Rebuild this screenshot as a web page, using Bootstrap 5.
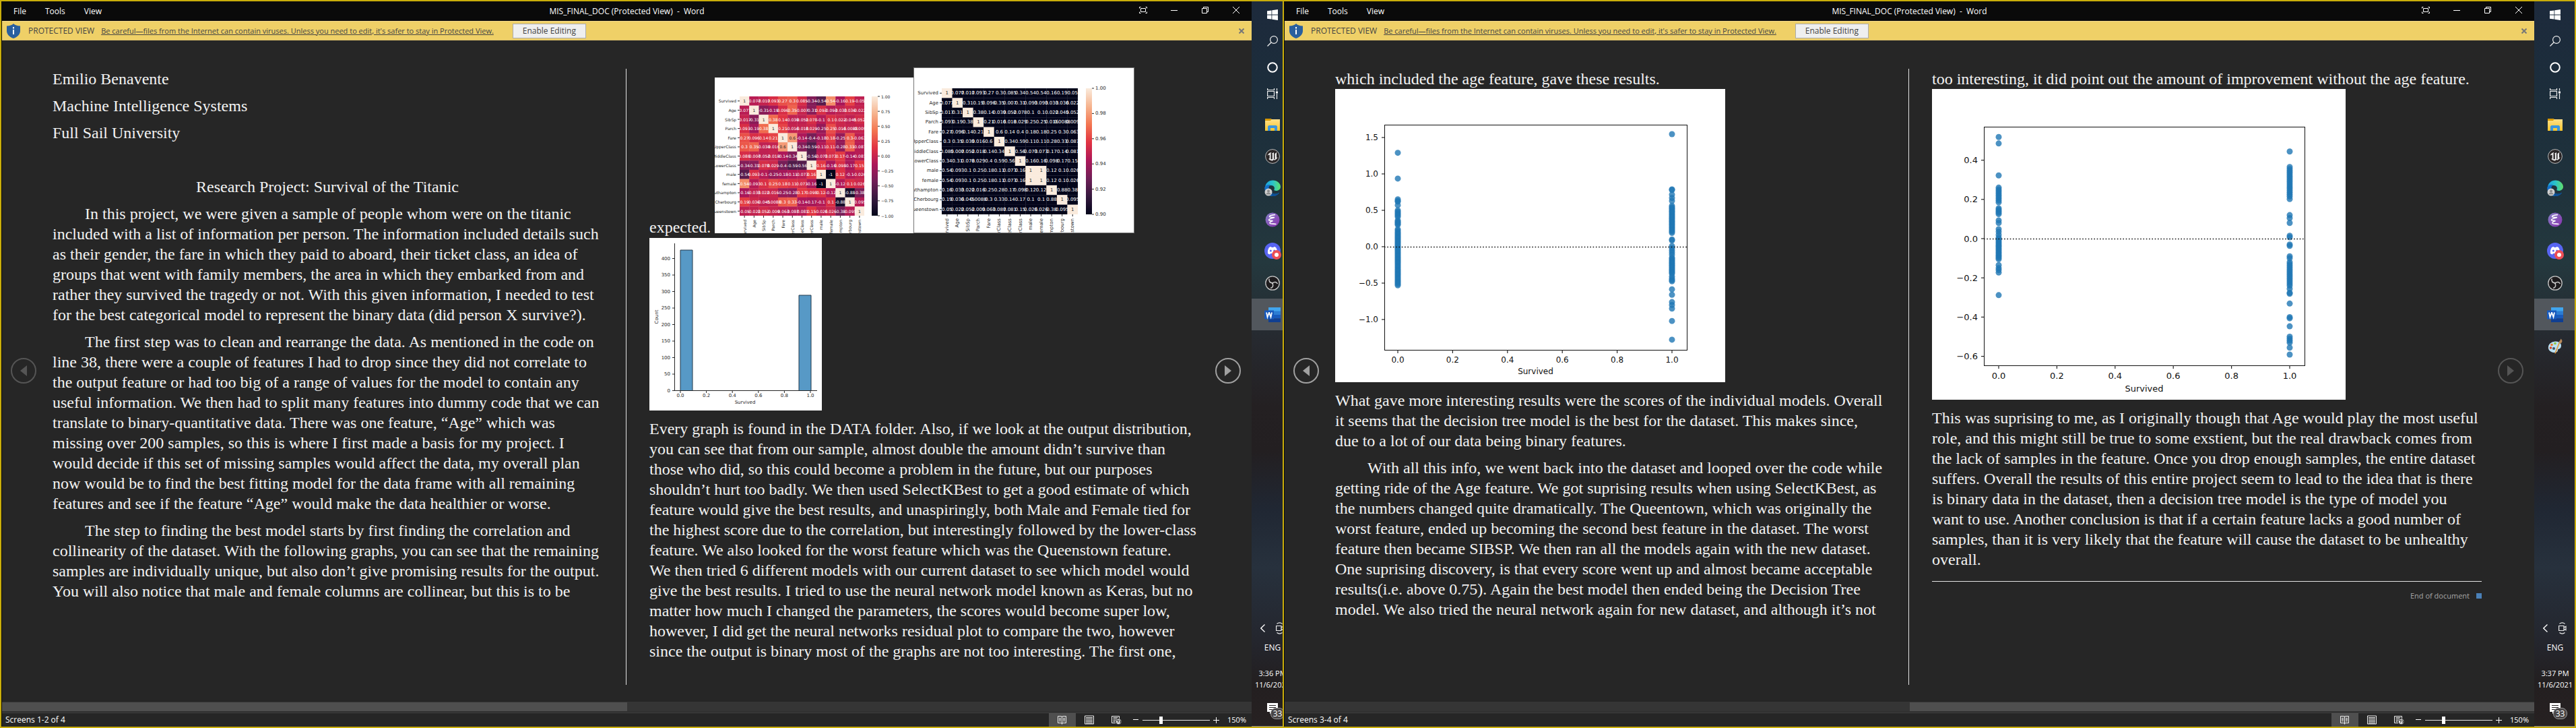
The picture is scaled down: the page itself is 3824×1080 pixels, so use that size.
<!DOCTYPE html>
<html lang="en" data-bs-theme="dark">
<head>
<meta charset="utf-8">
<meta name="viewport" content="width=device-width, initial-scale=1">
<title>MIS_FINAL_DOC (Protected View) - Word</title>
<link href="https://cdn.jsdelivr.net/npm/bootstrap@5.3.0/dist/css/bootstrap.min.css" rel="stylesheet">
<style>
:root{--edge:#c9ad0a;--page:#262626;--ui:"Open Sans","Noto Sans",sans-serif}
body{font-family:var(--ui);font-size:12px;line-height:16px;background:var(--page);color:#fff;overflow-x:hidden}
button{font:inherit;color:inherit;background:none;border:0;padding:0}
svg{display:block;flex:none}
.desktop{min-height:100vh}
.monitor{flex:1 1 0;min-width:0;border:2px solid var(--edge);background:var(--page)}
.monitor + .monitor{margin-left:-16px;z-index:1}
.app{flex:1 1 0;min-width:0;border-left:1px solid #0a0a0a}
.titlebar{height:29px;background:#0a0a0a}
.titlebar nav{gap:28px}
.titlebar nav button:first-child{margin-left:17px}
.side{flex:1 1 0}
.winbtn{width:46px;height:26px;display:flex;align-items:center;justify-content:center}
.warnbar{height:29px;background:#efd067;border-top:1px solid #f3d98a;border-bottom:1px solid #d9bf6c;color:#444;padding:0 7px}
.warnbar a{font-size:11px;color:#444;text-decoration:underline;margin-left:10px}
.enable{width:109px;height:22px;background:#efefef;border:1px solid #ababab;color:#444;margin-left:28px}
.reader{flex:1 1 auto;padding:42px 78px 25px 75px}
.sheet{flex:1 1 0;min-width:0;font-family:"Liberation Serif",serif;font-size:24px;line-height:30px;color:#f2f2f2}
.sheet p{margin:0 0 10px}
.sheet .ind{text-indent:48px}
.rule{width:70px;display:flex;justify-content:center}
.rule::before{content:"";width:1px;background:#e4e4e4}
.plot{background:#fff;margin:0 0 12px;max-width:100%}
.plot text,.heat text{font-family:"DejaVu Sans",sans-serif}
.heatrow{height:246px;gap:6px;margin:-2px 0 7px}
.heatrow > span{margin-bottom:-6px}
.heat{background:#fff}
.heat svg{overflow:hidden}
.framed{outline:1px solid #767676;outline-offset:-1px}
.turn{top:529px;width:38px;height:38px;border:2px solid #555;border-radius:50%;color:#555;display:flex;align-items:center;justify-content:center}
.turn.live{border-color:#a0a0a0;color:#a0a0a0}
.turn.prev{left:13px}.turn.next{right:16px}
.endmark{font-family:var(--ui);font-size:11px;line-height:16px;color:#a6a6a6;border-top:1px solid #e4e4e4;margin-top:17px;padding-top:13px}
.endmark i{width:8px;height:8px;background:#4a80b8;margin-left:10px}
.track{height:15px;background:#353535;padding:1px 0}
.track div{width:50%;background:#4f4f4f}
.statusbar{height:21px;border-top:1px solid #474747;margin-top:1px;padding:0 8px 0 5px}
.view{width:40px;height:20px;display:flex;align-items:center;justify-content:center}
.view.on{background:#4f4f4f}
.percent{font-size:11px;margin-left:12px}
.zoomer{-webkit-appearance:none;appearance:none;width:100px;height:11px;margin:0 4px 0 5px;background:linear-gradient(#e6e6e6,#e6e6e6) center/100% 1px no-repeat}
.zoomer::-webkit-slider-thumb{-webkit-appearance:none;width:5px;height:11px;background:#fff;border:0}
.taskbar{width:60px;background:linear-gradient(#1d2a3c 0,#1c2d3b 12%,#1f323c 25%,#24383e 36%,#26292f 47%,#242022 56%,#231f21 62%,#202733 70%,#27313d 78%,#24262e 88%,#231f20 94%,#272122 100%)}
.tb{width:62px;height:47px;display:flex;align-items:center;justify-content:center}
.tb.sys{height:39px}
.tb.sys + .tb:not(.sys){margin-top:3px}
.tb.on{background:#52575d}
.tray{width:62px}
.trayicons{gap:16px;padding:0 0 0 13px}
.lang{margin-top:12px}
.clock{font-size:11px;line-height:17px;white-space:nowrap;margin-top:21px}
.notif{width:62px;height:35px;margin-top:19px;padding-left:23px;border-bottom:1px solid #8b8787}
.badge-n{left:28px;top:7px;width:21px;height:17px;border:1px solid #999;border-radius:8px;background:#4a4647;line-height:15px}
</style>
<script src="https://cdn.jsdelivr.net/npm/bootstrap@5.3.0/dist/js/bootstrap.bundle.min.js"></script>
</head>
<body>
<svg width="0" height="0" class="position-absolute" aria-hidden="true">
<defs>
<linearGradient id="gEdge" x1="0" y1="0" x2="1" y2="0"><stop offset="0" stop-color="#1a9fe0"/><stop offset=".5" stop-color="#2cc3c8"/><stop offset="1" stop-color="#5fe06a"/></linearGradient>
<linearGradient id="gEm" x1="0" y1="0" x2="1" y2="1"><stop offset="0" stop-color="#8381c5"/><stop offset="1" stop-color="#8a2fae"/></linearGradient>
<linearGradient id="gFo" x1="0" y1="0" x2="0" y2="1"><stop offset="0" stop-color="#ffe08a"/><stop offset="1" stop-color="#f8c52c"/></linearGradient>
<linearGradient id="rocket" x1="0" y1="1" x2="0" y2="0"><stop offset="0" stop-color="#03051a"/><stop offset=".143" stop-color="#35193e"/><stop offset=".286" stop-color="#701f57"/><stop offset=".429" stop-color="#ad1759"/><stop offset=".571" stop-color="#e13342"/><stop offset=".714" stop-color="#f37651"/><stop offset=".857" stop-color="#f6b48f"/><stop offset="1" stop-color="#faebdd"/></linearGradient>
<symbol id="i-shield" viewBox="0 0 20 22"><path d="M10 0c2 2.200 5.500 3.500 10 3.500V11c0 5-4.500 9-10 11C4.500 20 0 16 0 11V3.500C4.500 3.500 8 2.200 10 0z" fill="#2a5f9e"/><path d="M9 5h2v2.500H9zM9 9h2v7H9z" fill="#fff"/></symbol>
<symbol id="i-fs" viewBox="0 0 12 12"><path d="M.5 3.500V1.500h2M9.500 1.500h2v2M11.500 8.500v2h-2M2.500 10.500h-2v-2M2.500 3.500h7v5h-7z" fill="none" stroke="#fff"/></symbol>
<symbol id="i-min" viewBox="0 0 10 10"><path d="M0 5.500h10" stroke="#fff"/></symbol>
<symbol id="i-max" viewBox="0 0 10 10"><path d="M.5 2.500h7v7h-7zM2.500 2V.5h7v7H8" fill="none" stroke="#fff"/></symbol>
<symbol id="i-x" viewBox="0 0 10 10"><path d="M0 0l10 10M10 0L0 10" stroke="#fff" fill="none"/></symbol>
<symbol id="i-xb" viewBox="0 0 8 8"><path d="M.5.5l7 7M7.500.5l-7 7" stroke="#777" stroke-width="2" fill="none"/></symbol>
<symbol id="i-read" viewBox="0 0 14 14"><path d="M6.500 1.500V13.500M.5 1.500h4.500L6.500 2.500l1.500-1H12.500v10H8L6.500 12.500l-1.500-1H.5zM2 4.500h3M2 6.500h3M2 8.500h3M8 4.500h3M8 6.500h3M8 8.500h3" fill="none" stroke="#eee"/></symbol>
<symbol id="i-print" viewBox="0 0 14 14"><path d="M.5 1h13v12H.5zM2 3.500h10M2 5.500h10M2 7.500h10M2 9.500h10M2 11.500h10" fill="none" stroke="#eee"/></symbol>
<symbol id="i-web" viewBox="0 0 15 14"><path d="M6 11.500H.5V1.500h11v4M2.500 3.500h7M2.500 5.500h6M2.500 7.500h4M2.500 9.500h3" fill="none" stroke="#eee"/><circle cx="10.500" cy="9.500" r="4" fill="#e6e6e6" stroke="#262626" stroke-width=".6"/><path d="M8 7.500l2.500.5-1 3M12 7.500l1.500 2-1 2" stroke="#333" stroke-width="1.200" fill="none"/></symbol>
<symbol id="i-start" viewBox="0 0 16 16"><path d="M0 2.300L6.500 1.400v6.200H0zM7.300 1.300L16 0v7.600H7.300zM0 8.400h6.500v6.200L0 13.700zM7.300 8.400H16V16l-8.700-1.300z" fill="#fff"/></symbol>
<symbol id="i-find" viewBox="0 0 16 16"><circle cx="10" cy="6" r="5.400" fill="none" stroke="#eee" stroke-width="1.200"/><path d="M6.200 9.800L.5 15.500" stroke="#eee" stroke-width="1.300"/></symbol>
<symbol id="i-cort" viewBox="0 0 16 16"><circle cx="8" cy="8" r="6.800" fill="none" stroke="#fff" stroke-width="2"/></symbol>
<symbol id="i-task" viewBox="0 0 16 16"><path d="M.6 0v2.500h9.900V0M.6 16v-2.500h9.900V16M.6 4.500h9.900v7H.6zM14.500 0v3.500M14.500 8v8" fill="none" stroke="#eee" stroke-width="1.200"/><path d="M13 4.500h3v3h-3z" fill="#fff"/></symbol>
<symbol id="i-folder" viewBox="0 0 22 18"><path d="M0 0h9l1 1.500V4H0z" fill="#d99a00"/><path d="M0 3h8l1.500-2H22v17H0z" fill="url(#gFo)"/><path d="M4 18v-6.500L5.500 10h11l1.500 1.500V18h-4v-4H8v4z" fill="#3a96dd"/></symbol>
<symbol id="i-ue" viewBox="0 0 22 22"><circle cx="11" cy="11" r="10.400" fill="#2a2627" stroke="#bbb"/><path d="M3.500 10C4.500 7 7 5.500 9.500 4.800 8.500 5.800 8.500 6.500 8.500 8v6.500c0 1 1.200 1.200 2.300.2V7.500L10 6.700 13 5v9.500c0 .8.6 1.100 1.500.6V7L18 4.500c-1 1.500-1 2-1 4v4.500c.6 0 1.200-.4 1.600-.9-.9 2.400-2.600 3.900-4.600 4.600l-1-1-2 1.800c-2.500-.1-4.800-1.300-5.800-3 1 .2 1.500-.2 1.500-1V8.700C5 8.500 4.200 9.200 3.500 10z" fill="#eee"/></symbol>
<symbol id="i-edge" viewBox="0 0 24 24"><path d="M1 12C1 5 6 .5 12.500.5S24 5.500 24 10c0 3.500-3 6-6.500 6-2.500 0-3.500-1-3-2 1.500-3-1-6-4.500-6-5 0-8 4-9 4z" fill="url(#gEdge)"/><path d="M.3 11C1.500 8 5.500 6.500 9 7c-4 3-4 11 5 13.500 3.500.8 7-.5 8-2-1.500 3.500-5.500 5.500-10 5.500C5 24-.3 18 .3 11z" fill="#1470c8"/><path d="M8.500 12c-1 5 2.500 8.500 7 8.500 2.500 0 5.500-1 6.500-2-1 3.500-5 5.500-10 5.500-4-2-5-8-3.500-12z" fill="#0d4f94"/><circle cx="6" cy="18" r="5.500" fill="#d0d0d0"/><circle cx="6" cy="16.500" r="2" fill="#8d8d8d"/><path d="M2.500 21.500c0-4 7-4 7 0z" fill="#8d8d8d"/></symbol>
<symbol id="i-emacs" viewBox="0 0 22 22"><circle cx="11" cy="11" r="10.500" fill="url(#gEm)"/><path d="M15 3.500c-5 .5-8.500 1.500-8.500 2.800 0 1.200 4 1.200 7.500 1.200-5 1.200-8.500 2.500-8.500 3.800 0 1.200 3.500 1.500 6 1.200-2.500 1-5 2.300-4.500 3.500.8 1.700 6.500.8 9.500 1.500" fill="none" stroke="#fff" stroke-width="1.600"/></symbol>
<symbol id="i-disc" viewBox="0 0 25 25"><circle cx="12" cy="12" r="12" fill="#5865f2"/><path d="M5 16c-.5-3 .3-6.500 2-9 1-.6 2-.9 3-1l.5 1h3l.5-1c1 .1 2 .4 3 1 1.700 2.500 2.500 6 2 9-1 .8-2 1.200-3.200 1.500l-.8-1.500h-6l-.8 1.500C7 17.200 6 16.800 5 16z" fill="#fff"/><circle cx="9.300" cy="12" r="1.500" fill="#5865f2"/><circle cx="14.700" cy="12" r="1.500" fill="#5865f2"/><circle cx="18" cy="18" r="7" fill="#ed4e56"/><circle cx="18" cy="18" r="3" fill="#fff"/></symbol>
<symbol id="i-obs" viewBox="0 0 22 22"><circle cx="11" cy="11" r="10.200" fill="#1d1b1d" stroke="#c8c8c8" stroke-width="1.300"/><path d="M6 4.500c-.5 3.500 1.500 6 5 6.500M18.500 12c-1.500-3-4.500-3.500-7.500-1M8 18.500c3.500-.5 4.500-3.500 3-7.500" fill="none" stroke="#c8c8c8" stroke-width="1.500"/><circle cx="11" cy="11" r="1.300" fill="#c8c8c8"/></symbol>
<symbol id="i-word" viewBox="0 0 24 22"><path d="M6 0h18v6H6z" fill="#41a5ee"/><path d="M6 5.500h18V11H6z" fill="#2b7cd3"/><path d="M6 11h18v5.500H6z" fill="#185abd"/><path d="M6 16.500h18V22H6z" fill="#103f91"/><path d="M0 4.500h14v13H0z" fill="#185abd"/><path d="M3 7.500l1.500 7 2.300-6.500h.4l2.300 6.500 1.500-7" fill="none" stroke="#fff" stroke-width="1.800"/></symbol>
<symbol id="i-paint" viewBox="0 0 24 24"><path d="M2 15C1 9 6 5 12 4.500c5-.3 9 2 9 6 0 2.500-1 4.500-2.500 5-1.500.4-2.500.5-2.500 2 0 2-1.500 3.500-5 3.500s-8-2-9-6z" fill="#b9dff2"/><circle cx="5.500" cy="14" r="1.800" fill="#d9442e"/><circle cx="7" cy="9.500" r="1.800" fill="#e9792b"/><circle cx="12" cy="7.500" r="1.800" fill="#8dc63f"/><circle cx="10" cy="15" r="2" fill="#3a5568"/><path d="M19 7l-6 15-1.500 1 .2-2L17.500 6z" fill="#e49b3f"/><path d="M18 6.500c-1-2 1.500-2.500 2.500-6 2 2 3.500 5-1 7.500z" fill="#b98a5c"/></symbol>
<symbol id="i-cam" viewBox="0 0 12 18"><path d="M1.500 2.500c2.500-2 5.500-2 8 0M1.500 15.500c2.500 2 5.500 2 8 0M.6 5.500h7.400v7H.6zM8 8l3-1.800v5.600L8 10" fill="none" stroke="#eee" stroke-width="1.200"/></symbol>
<symbol id="i-chev" viewBox="0 0 7 12"><path d="M6.500.5L.8 6l5.700 5.500" fill="none" stroke="#fff" stroke-width="1.300"/></symbol>
<symbol id="i-note" viewBox="0 0 16 16"><path d="M0 0h16v13H8l-4 3v-3H0z" fill="#fff"/><path d="M3 3.500h10M3 6.500h10M3 9.500h7" stroke="#231f20" stroke-width="1.200"/></symbol>
</defs>
</svg>

<div class="desktop d-flex" id="desktop">
  <section class="monitor d-flex position-relative overflow-hidden">
    <div class="app d-flex flex-column position-relative">
      <header class="titlebar d-flex" data-part="title"></header>
      <div class="warnbar d-flex align-items-center" data-part="warn"></div>
      <main class="reader d-flex">
        <article class="sheet">
          <p>Emilio Benavente</p>
          <p>Machine Intelligence Systems</p>
          <p>Full Sail University</p>
          <p>&nbsp;</p>
          <p class="text-center">Research Project: Survival of the Titanic</p>
          <p class="ind">In this project, we were given a sample of people whom were on the titanic included with a list of information per person. The information included details such as their gender, the fare in which they paid to aboard, their ticket class, an idea of groups that went with family members, the area in which they embarked from and rather they survived the tragedy or not. With this given information, I needed to test for the best categorical model to represent the binary data (did person X survive?).</p>
          <p class="ind">The first step was to clean and rearrange the data. As mentioned in the code on line 38, there were a couple of features I had to drop since they did not correlate to the output feature or had too big of a range of values for the model to contain any useful information. We then had to split many features into dummy code that we can translate to binary-quantitative data. There was one feature, “Age” which was missing over 200 samples, so this is where I first made a basis for my project. I would decide if this set of missing samples would affect the data, my overall plan now would be to find the best fitting model for the data frame with all remaining features and see if the feature “Age” would make the data healthier or worse.</p>
          <p class="ind">The step to finding the best model starts by first finding the correlation and collinearity of the dataset. With the following graphs, you can see that the remaining samples are individually unique, but also don’t give promising results for the output. You will also notice that male and female columns are collinear, but this is to be</p>
        </article>
        <div class="rule"></div>
        <article class="sheet">
          <div class="heatrow d-flex align-items-end"><span>expected.</span>
            <div class="d-flex align-items-end">
              <svg class="heat" id="heatA" width="295" height="231" role="img" aria-label="Correlation heatmap"></svg>
              <svg class="heat framed" id="heatB" width="328" height="246" role="img" aria-label="Absolute correlation heatmap"></svg>
            </div>
          </div>
          <svg class="plot" id="hist" width="256" height="256" role="img" aria-label="Histogram of Survived"></svg>
          <p>Every graph is found in the DATA folder. Also, if we look at the output distribution, you can see that from our sample, almost double the amount didn’t survive than those who did, so this could become a problem in the future, but our purposes shouldn’t hurt too badly. We then used SelectKBest to get a good estimate of which feature would give the best results, and unaspiringly, both Male and Female tied for the highest score due to the correlation, but interestingly followed by the lower-class feature. We also looked for the worst feature which was the Queenstown feature.<br>We then tried 6 different models with our current dataset to see which model would give the best results. I tried to use the neural network model known as Keras, but no matter how much I changed the parameters, the scores would become super low, however, I did get the neural networks residual plot to compare the two, however since the output is binary most of the graphs are not too interesting. The first one,</p>
        </article>
      </main>
      <button class="turn prev position-absolute" aria-label="Previous screen" disabled><svg width="10" height="16" viewBox="0 0 10 16"><path d="M10 0v16L0 8z" fill="currentColor"/></svg></button>
      <button class="turn next live position-absolute" aria-label="Next screen"><svg width="10" height="16" viewBox="0 0 10 16"><path d="M0 0v16l10-8z" fill="currentColor"/></svg></button>
      <div class="track d-flex"><div></div></div>
      <footer class="statusbar d-flex align-items-center" data-part="status" data-label="Screens 1-2 of 4"></footer>
    </div>
    <aside class="taskbar d-flex flex-column flex-shrink-0" data-part="tasks" data-time="3:36 PM"></aside>
  </section>

  <section class="monitor d-flex position-relative overflow-hidden">
    <div class="app d-flex flex-column position-relative">
      <header class="titlebar d-flex" data-part="title"></header>
      <div class="warnbar d-flex align-items-center" data-part="warn"></div>
      <main class="reader d-flex">
        <article class="sheet">
          <div>which included the age feature, gave these results.</div>
          <svg class="plot" id="resA" width="579" height="435" role="img" aria-label="Residual plot with Age"></svg>
          <p>What gave more interesting results were the scores of the individual models. Overall it seems that the decision tree model is the best for the dataset. This makes since, due to a lot of our data being binary features.</p>
          <p class="ind">With all this info, we went back into the dataset and looped over the code while getting ride of the Age feature. We got suprising results when using SelectKBest, as the numbers changed quite dramatically. The Queentown, which was originally the worst feature, ended up becoming the second best feature in the dataset. The worst feature then became SIBSP. We then ran all the models again with the new dataset. One suprising discovery, is that every score went up and almost became acceptable results(i.e. above 0.75). Again the best model then ended being the Decision Tree model. We also tried the neural network again for new dataset, and although it’s not</p>
        </article>
        <div class="rule"></div>
        <article class="sheet">
          <div>too interesting, it did point out the amount of improvement without the age feature.</div>
          <svg class="plot" id="resB" width="614" height="461" role="img" aria-label="Residual plot without Age"></svg>
          <p>This was suprising to me, as I originally though that Age would play the most useful role, and this might still be true to some exstient, but the real drawback comes from the lack of samples in the feature. Once you drop enough samples, the entire dataset suffers. Overall the results of this entire project seem to lead to the idea that is there is binary data in the dataset, then a decision tree model is the type of model you want to use. Another conclusion is that if a certain feature lacks a good number of samples, than it is very likely that the feature will cause the dataset to be unhealthy overall.</p>
          <div class="endmark d-flex justify-content-end align-items-center">End of document<i></i></div>
        </article>
      </main>
      <button class="turn prev live position-absolute" aria-label="Previous screen"><svg width="10" height="16" viewBox="0 0 10 16"><path d="M10 0v16L0 8z" fill="currentColor"/></svg></button>
      <button class="turn next position-absolute" aria-label="Next screen" disabled><svg width="10" height="16" viewBox="0 0 10 16"><path d="M0 0v16l10-8z" fill="currentColor"/></svg></button>
      <div class="track d-flex justify-content-end"><div></div></div>
      <footer class="statusbar d-flex align-items-center" data-part="status" data-label="Screens 3-4 of 4"></footer>
    </div>
    <aside class="taskbar d-flex flex-column flex-shrink-0" data-part="tasks" data-time="3:37 PM" data-paint="1"></aside>
  </section>
</div>

<script>
const icon = (id, w, h) => `<svg width="${w}" height="${h}" aria-hidden="true"><use href="#i-${id}"/></svg>`;
const parts = {
  title: () => `<nav class="side d-flex align-items-center"><button>File</button><button>Tools</button><button>View</button></nav>
    <div class="d-flex align-items-center text-nowrap">MIS_FINAL_DOC (Protected View)&nbsp; -&nbsp; Word</div>
    <div class="side d-flex justify-content-end">
      <button class="winbtn" aria-label="Full screen">${icon('fs',12,12)}</button><button class="winbtn" aria-label="Minimize">${icon('min',10,10)}</button>
      <button class="winbtn" aria-label="Restore">${icon('max',10,10)}</button><button class="winbtn" aria-label="Close">${icon('x',10,10)}</button></div>`,
  warn: () => `${icon('shield',20,22)}<span class="ms-2 ps-1">PROTECTED VIEW</span><a href="#">Be careful—files from the Internet can contain viruses. Unless you need to edit, it's safer to stay in Protected View.</a>
    <button class="enable">Enable Editing</button><button class="ms-auto p-1" aria-label="Dismiss">${icon('xb',8,8)}</button>`,
  status: el => `<span>${el.dataset.label}</span><button class="view on ms-auto" aria-label="Read mode">${icon('read',14,14)}</button>
    <button class="view" aria-label="Print layout">${icon('print',14,14)}</button><button class="view" aria-label="Web layout">${icon('web',15,14)}</button>
    <button class="ms-1" aria-label="Zoom out"><svg width="10" height="10"><path d="M1 4.500h8" stroke="#fff"/></svg></button>
    <input class="zoomer" type="range" min="0" max="100" value="26" aria-label="Zoom">
    <button aria-label="Zoom in"><svg width="10" height="10"><path d="M1 5.500h9M5.500 1v9" stroke="#fff"/></svg></button>
    <span class="percent">150%</span>`,
  tasks: el => {
    const sys = [['start',16,16,'Start'],['find',16,16,'Search'],['cort',16,16,'Cortana'],['task',16,16,'Task view']];
    const apps = [['folder',22,18,'Explorer'],['ue',22,22,'Unreal'],['edge',24,24,'Edge'],['emacs',22,22,'Emacs'],['disc',25,25,'Discord'],['obs',22,22,'OBS'],['word',24,22,'Word']];
    if (el.dataset.paint) apps.push(['paint',24,24,'Paint']);
    const b = (a, c) => `<button class="tb ${c}" aria-label="${a[3]}">${icon(a[0],a[1],a[2])}</button>`;
    return sys.map(a => b(a,'sys')).join('') + apps.map(a => b(a, a[0] === 'word' ? 'on' : '')).join('') +
      `<div class="tray mt-auto text-center">
        <div class="trayicons d-flex align-items-center">${icon('chev',7,12)}${icon('cam',12,18)}</div>
        <div class="lang">ENG</div><div class="clock">${el.dataset.time}<br>11/6/2021</div>
        <div class="notif position-relative">${icon('note',16,16)}<span class="badge-n position-absolute">33</span></div></div>`;
  }
};
document.querySelectorAll('[data-part]').forEach(el => el.innerHTML = parts[el.dataset.part](el));

const T = (x, y, s, size, anchor, fill, extra) => `<text x="${x}" y="${y}" font-size="${size}" text-anchor="${anchor}" dominant-baseline="central" fill="${fill || '#262626'}" ${extra || ''}>${s}</text>`;
const L = (x1, y1, x2, y2, extra) => `<path d="M${x1} ${y1}L${x2} ${y2}" stroke="#262626" ${extra || ''}/>`;

/* correlation matrix, upper triangle */
const names = ['Survived','Age','SibSp','Parch','Fare','UpperClass','MiddleClass','LowerClass','male','female','Southampton','Cherbourg','Queenstown'];
const upper = [
 [1,-.077,-.017,.093,.27,.3,.085,-.34,-.54,.54,-.16,.19,-.05],
 [1,-.31,-.19,.096,.35,-.007,-.31,.093,-.093,-.033,.036,-.022],
 [1,.38,.14,-.039,-.052,.078,-.1,.1,.022,-.045,.052],
 [1,.21,-.016,-.018,.029,-.25,.25,.016,-.0088,-.009],
 [1,.6,-.14,-.4,-.18,.18,-.25,.3,-.063],
 [1,-.34,-.59,-.11,.11,-.28,.33,-.087],
 [1,-.56,-.073,.073,.17,-.14,-.081],
 [1,.16,-.16,.098,-.17,.15],
 [1,-1,.12,-.1,-.026],[1,-.12,.1,.026],[1,-.88,-.38],[1,-.095],[1]];
const corr = (r, c) => r <= c ? upper[r][c - r] : upper[c][r - c];
const stops = [[3,5,26],[53,25,62],[112,31,87],[173,23,89],[225,51,66],[243,118,81],[246,180,143],[250,235,221]];
const rocket = t => { const p = Math.max(0, Math.min(1, t)) * 7, i = Math.min(6, Math.floor(p)), f = p - i;
  return `rgb(${stops[i].map((v, k) => Math.round(v + (stops[i + 1][k] - v) * f))})`; };
function heat(id, g, abs, ticks) {
  const w = g.x1 - g.x0, h = g.y1 - g.y0, cw = w / 13, ch = h / 13; let s = '', t = '', n = '';
  for (let r = 0; r < 13; r++) {
    for (let c = 0; c < 13; c++) {
      const v = abs ? Math.abs(corr(r, c)) : corr(r, c);
      s += `<rect x="${c * cw}" y="${r * ch}" width="${cw + .3}" height="${ch + .3}" fill="${rocket(abs ? (v - .9) * 10 : (v + 1) / 2)}"/>`;
      n += T((c + .5) * cw, (r + .5) * ch, v, g.size, 'middle', v > .58 && !(abs && v < .95) ? '#262626' : '#fff');
    }
    const y = g.y0 + (r + .5) * ch, x = g.x0 + (r + .5) * cw;
    t += L(g.x0 - 3, y, g.x0, y) + T(g.x0 - 5, y, names[r], g.size, 'end') + L(x, g.y1, x, g.y1 + 3) +
      T(0, 0, names[r], g.size, 'end', '', `transform="translate(${x} ${g.y1 + 6}) rotate(-90)"`);
  }
  t += `<rect x="${g.bar}" y="${g.y0}" width="9" height="${h}" fill="url(#rocket)"/>`;
  ticks.forEach((k, i) => { const y = g.y0 + h * i / (ticks.length - 1); t += L(g.bar + 9, y, g.bar + 12, y) + T(g.bar + 14, y, k, g.size, 'start'); });
  document.getElementById(id).innerHTML = `<svg x="${g.x0}" y="${g.y0}" width="${w}" height="${h}">${s}${n}</svg>${t}`;
}
heat('heatA', {x0:37, x1:222, y0:28, y1:205, bar:233, size:6}, false, ['1.00','0.75','0.50','0.25','0.00','−0.25','−0.50','−0.75','−1.00']);
heat('heatB', {x0:42, x1:244, y0:31, y1:218, bar:256, size:7}, true, ['1.00','0.98','0.96','0.94','0.92','0.90']);

/* histogram */
{ let s = '<path d="M46 226V18h18v208M222 226V85h18v141" fill="#5799c6" stroke="#22384a"/>' + L(37.5, 8, 37.5, 226) + L(37, 226.5, 249, 226.5);
  for (let i = 0; i <= 8; i++) s += L(34, 226.5 - i * 24.5, 37, 226.5 - i * 24.5) + T(31, 226.5 - i * 24.5, i * 50, 7, 'end');
  for (let i = 0; i <= 5; i++) s += L(46 + i * 38.6, 227, 46 + i * 38.6, 230) + T(46 + i * 38.6, 234, (i / 5).toFixed(1), 7, 'middle');
  s += T(142, 244, 'Survived', 7, 'middle') + T(0, 0, 'Count', 7, 'middle', '', 'transform="translate(11 117) rotate(-90)"');
  document.getElementById('hist').innerHTML = s; }

/* residual plots */
const span = (a, b, n) => Array.from({length: n}, (_, i) => a + (b - a) * i / (n - 1));
function residual(id, g, ticks, left, right) {
  const Y = v => g.zero - v * g.unit; let s = '';
  [[g.l, left], [g.r, right]].forEach(([x, pts]) => pts.forEach(v => s += `<circle cx="${x}" cy="${Y(v)}" r="4.500" fill="#1f77b4" fill-opacity=".8"/>`));
  s += `<path d="M${g.x0} ${g.zero + .5}H${g.x1}" stroke="#111" stroke-width="1.600" stroke-dasharray="1.600 2.700"/><rect x="${g.x0 + .5}" y="${g.y0 + .5}" width="${g.x1 - g.x0}" height="${g.y1 - g.y0}" fill="none" stroke="#111"/>`;
  ticks.forEach(v => s += L(g.x0 - 4, Y(v), g.x0, Y(v), 'stroke-width="1.200"') + T(g.x0 - 9, Y(v), v.toFixed(1).replace('-', '−'), g.size, 'end', '#111'));
  for (let i = 0; i <= 5; i++) { const x = g.l + (g.r - g.l) * i / 5; s += L(x, g.y1, x, g.y1 + 5, 'stroke-width="1.200"') + T(x, g.y1 + 15, (i / 5).toFixed(1), g.size, 'middle', '#111'); }
  s += T((g.x0 + g.x1) / 2, g.lab, 'Survived', g.size, 'middle', '#111');
  document.getElementById(id).innerHTML = s;
}
residual('resA', {x0:73, x1:522, y0:53, y1:387, zero:234, unit:108, l:93, r:500, lab:419, size:12}, [1.5,1,.5,0,-.5,-1],
  [1.29,.936,.65,.63,.62,.57,...span(.5,.41,6),...span(.36,.3,5),...span(.24,-.53,42)],
  [1.546,.787,.78,.716,.67,.63,...span(.56,.19,22),.1,.085,.01,-.02,-.05,-.08,-.11,...span(-.15,-.37,14),-.41,-.44,-.46,-.475,-.585,-.66,-.76,-.8,-.85,-1.02,-1.277]);
residual('resB', {x0:77, x1:553, y0:56, y1:410, zero:222, unit:291, l:99, r:531, lab:444, size:13}, [.4,.2,0,-.2,-.4,-.6],
  [.518,.485,.322,...span(.26,.185,9),...span(.155,.125,5),.093,.08,.048,.035,.02,...span(.005,-.105,16),-.135,-.15,-.16,-.173,-.288],
  [.444,...span(.365,.215,16),.202,.12,.105,.08,.015,.007,-.03,-.037,-.09,-.1,-.12,...span(-.13,-.24,12),-.256,-.276,-.281,-.331,-.4,-.406,-.447,-.5,-.51,-.52,-.53,-.556,-.591]);
</script>
</body>
</html>
